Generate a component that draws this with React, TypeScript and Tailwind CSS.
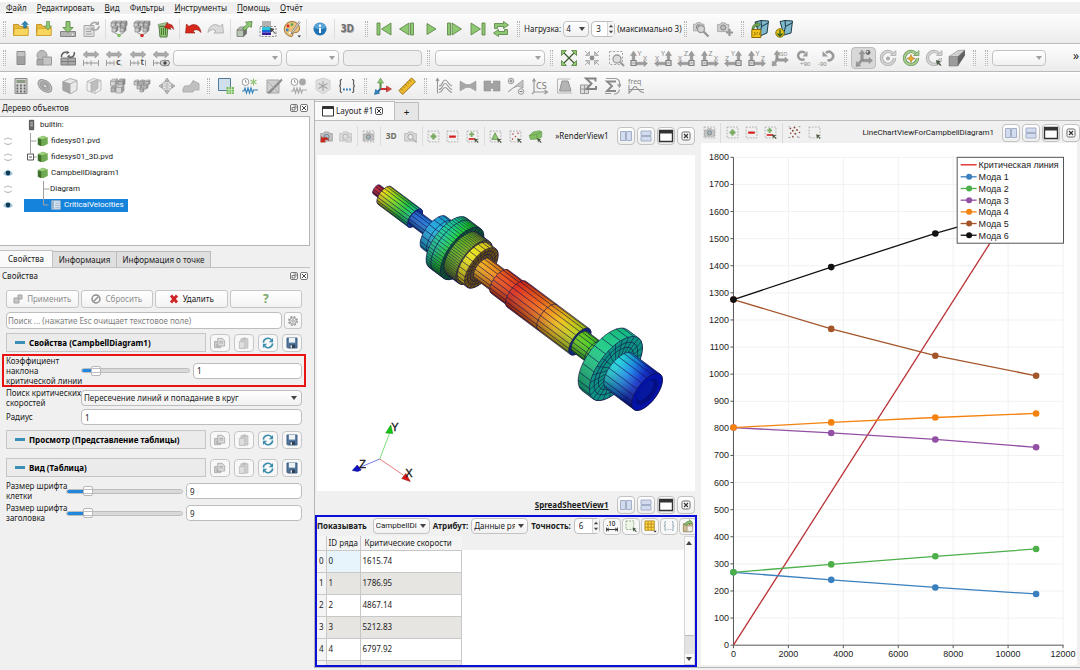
import { ReactNode } from "react";
import clsx from "clsx";

const GRAY = "#9b9b9b";
const GREEN = "#8fc873";
const DGREEN = "#55803f";

/* ---------- icons, all on an 18 x 18 grid ---------- */

function cube(x: number, y: number, s: number, fill: string, line: string) {
  const d = s * 0.3;
  return (
    <g fill={fill} stroke={line} strokeWidth=".7" strokeLinejoin="round">
      <path d={`M${x} ${y + d}h${s - d}v${s - d}h${d - s}z`} />
      <path d={`M${x} ${y + d}l${d} ${-d}h${s - d}l${-d} ${d}z`} />
      <path d={`M${x + s - d} ${y + d}l${d} ${-d}v${s - d}l${-d} ${d}z`} fill={line} />
    </g>
  );
}

const dashedBox = (
  <rect x="2.500" y="2.500" width="13" height="13" fill="none" stroke="#9a9a9a" strokeWidth=".9" strokeDasharray="2 1.600" />
);
const cursor = <path d="M11 11l5 1.600-2 .9 2.400 2.400-1 1-2.300-2.400-1 1.900z" fill="#4a5a42" />;
const folder = (
  <>
    <path d="M1.500 15.500v-11h5l1.500 2h8v9z" fill="#e9b93a" stroke="#b8871c" strokeWidth=".8" />
    <path d="M1.500 15.500l1-7h14l-.5 7z" fill="#f8d55c" stroke="#c59526" strokeWidth=".6" />
  </>
);
const camera = (c: string, lens: string) => (
  <>
    <path d="M2 5.500h3.500l1-2h5l1 2H16v9H2z" fill={c} stroke="#8f8f8f" strokeWidth=".8" />
    <circle cx="9" cy="9.500" r="3.200" fill={lens} stroke="#777" />
  </>
);
const servers = (c: string) => (
  <>
    {cube(1, 1, 6, "#cfcfcf", "#828282")}
    {cube(6, 1, 6, "#cfcfcf", "#828282")}
    {cube(11, 1, 6, "#c2c2c2", "#828282")}
    {cube(2, 6, 6, "#cfcfcf", "#828282")}
    {cube(10, 6, 6, "#c2c2c2", "#828282")}
    <path d="M4 12.500l5 2.500 5-2.500" fill="none" stroke="#9a9a9a" />
    <circle cx="9" cy="15.500" r="1.800" fill={c} />
  </>
);
const lr = (
  <>
    <path d="M1 5.500L5 2v2h8V2l4 3.500L13 9V7H5v2z" fill="#ababab" stroke="#8c8c8c" strokeWidth=".5" />
    <path d="M1.500 11v6M9 11.500v5M16.500 11v6M1 14h16M5 12.500v3" stroke="#9a9a9a" fill="none" />
  </>
);

function axes(v: string, h: string, left = false) {
  const flip = left ? "matrix(-1 0 0 1 18 0)" : undefined;
  return (
    <>
      <g transform={flip} fill={GRAY} stroke="#858585" strokeWidth=".4">
        <path d="M3.500 2L6.500 6.500H4.800V12h-2.600V6.500H.5z" />
        <path d="M17.500 14.500L14 17.500v-1.700H6v-2.600h8v-1.700z" />
        <path d="M1 11.500h5v5H1z" fill="#ddd" stroke="#808080" strokeWidth="1.200" />
        <path d="M2.500 13l2 2m0-2l-2 2" stroke="#707070" />
      </g>
      <g fontFamily="Noto Sans, sans-serif" fontSize="7" fill="#8d8d8d" textAnchor="middle">
        <text x={left ? 9 : 9.5} y="6.500">{v}</text>
        <text x={left ? 3 : 15} y="11.500">{h}</text>
      </g>
    </>
  );
}

const ring = (c: string, line: string) => (
  <>
    <path d="M14.800 6A6.500 6.500 0 1 0 15.500 9" fill="none" stroke={line} strokeWidth="3.200" />
    <path d="M14.800 6A6.500 6.500 0 1 0 15.500 9" fill="none" stroke={c} strokeWidth="2" />
    <path d="M11.500 6.500h5.500V1.500z" fill={c} stroke={line} strokeWidth=".6" />
  </>
);
const note = (t: string, x: number, y: number, size: number, fill = "#858585", weight = 400) => (
  <text x={x} y={y} fontSize={size} fill={fill} fontWeight={weight} fontFamily="Noto Sans, sans-serif">
    {t}
  </text>
);
const playFill = { fill: GREEN, stroke: DGREEN, strokeWidth: 0.8 };
const wave = (c: string) => (
  <path d="M1 14h2l1-3 1.500 5L7 11l1.500 5L10 11l1.500 5 1-3H17" fill="none" stroke={c} strokeWidth="1.100" />
);
const clock = (
  <>
    <circle cx="4.500" cy="5" r="3.400" fill="#fff" stroke="#9a9a9a" />
    <path d="M4.500 3v2.200h1.600" stroke="#777" fill="none" strokeWidth=".7" />
  </>
);

const ICONS: Record<string, ReactNode> = {
  open: <>{folder}<path d="M13 1l3.500 3.500h-2V8h-3V4.500h-2z" fill="#2f86b5" stroke="#1f5f86" strokeWidth=".4" /></>,
  recent: <>{folder}<path d="M13 10L9.500 6h2V1.500h3V6h2z" fill={GREEN} stroke={DGREEN} strokeWidth=".6" /></>,
  save: (
    <>
      <path d="M1.500 11.500h15v5h-15z" fill="#b4b4b4" stroke="#858585" />
      <path d="M9 12.500L3.800 7.500H7V1.500h4v6h3.200z" {...playFill} />
      <circle cx="13.500" cy="14.500" r=".8" fill="#fff" />
    </>
  ),
  reload: (
    <>
      <path d="M2 5.500h10v11H2z" fill="#dedede" stroke="#aaa" />
      <path d="M4 9h4M4 11.500h5M4 14h6" stroke="#a5a5a5" />
      <path d="M8.500 6.500a4.200 4.200 0 0 1 7-3M17 6a4.200 4.200 0 0 1-7 3" fill="none" stroke="#a8a8a8" strokeWidth="1.700" />
      <path d="M17 1v4h-4zM8.500 11.500v-4h4z" fill="#a8a8a8" />
    </>
  ),
  connect: servers("#7cc25e"),
  disconnect: servers("#c92b2b"),
  trash: (
    <>
      <path d="M3 6.500h9l-1 10.500H4z" fill="#8cc66f" stroke="#5b7a4b" />
      <path d="M5.500 8v7M7.500 8v7M9.500 8v7" stroke="#4d7a38" />
      <path d="M2 4.500l9-2 .5 2-9 2z" fill="#a9cf95" stroke="#5b7a4b" strokeWidth=".6" />
      <path d="M8.500 7.500l3-5 1.500 2c2.500-1 4.500 1.500 4.500 5-1.500-2-2.500-2.500-3.500-2l1 2z" fill="#d42a1e" stroke="#7d1a14" strokeWidth=".5" />
    </>
  ),
  undo: <path d="M1.500 13l1-9 2.500 2.500C10 2.500 16 5 17 12.500c-2.500-3-5-3.700-8-1.500l2 2z" fill="#d8281c" stroke="#8f170f" strokeWidth=".6" />,
  redo: <path d="M16.500 13l-1-9L13 6.500C8 2.500 2 5 1 12.500c2.500-3 5-3.700 8-1.500l-2 2z" fill="#dadada" stroke="#a8a8a8" strokeWidth=".8" />,
  cubeArrow: (
    <>
      {cube(2, 7, 9.5, "#b9c4b2", "#6f6f6f")}
      <path d="M7.500 8.500l5-4.500-2-1.800 6.500-.7-.7 6-1.800-1.500-4.500 4.500z" {...playFill} />
    </>
  ),
  scaleBar: (
    <>
      <path d="M3 1h9v6H3z" fill="#b2b2b2" />
      <path d="M3 7h9v3H3z" fill="#2ec4e0" />
      <path d="M3 10h9v2.500H3z" fill="#1d63d8" />
      <path d="M3 12.500h9V15H3z" fill="#3b1a9c" />
      <path d="M1 6.500h16v10H1z" fill="none" stroke="#888" strokeDasharray="2 1.500" />
      <path d="M12 9l4.500 5M11.500 8.500l3.500.8-2.700 2.400z" stroke="#444" fill="#444" />
    </>
  ),
  palette: (
    <>
      <path d="M9 1.500a7.500 7.500 0 1 0-.5 15c2 0 .5-2.500 2-3.500s5.500.5 6-4S13 1.500 9 1.500z" fill="#e8c07a" stroke="#8a5f1f" strokeWidth=".8" />
      <circle cx="5" cy="6" r="1.400" fill="#d22" />
      <circle cx="4.300" cy="10" r="1.400" fill="#3a7fd0" />
      <circle cx="9" cy="4.500" r="1.300" fill="#4ca64c" />
      <circle cx="7" cy="13" r="1.300" fill="#f2f2f2" />
      <path d="M16 1.500l-7 10-1 2.500 2-1.500 7-10z" fill="#f6f6f6" stroke="#555" strokeWidth=".6" />
      <path d="M14.500 15.500h3.500L16.200 17.500z" fill="#333" />
    </>
  ),
  info: (
    <>
      <circle cx="9" cy="9" r="6.500" fill="#2173b4" />
      <path d="M3 7.500a6.300 6.300 0 0 1 12 0c-3 2-9 2-12 0z" fill="#58a5da" />
      <path d="M8 8h2v5H8z" fill="#fff" />
      <circle cx="9" cy="5.700" r="1.200" fill="#fff" />
    </>
  ),
  threeD: <>{note("3D", 2.5, 12.5, 10, "#aaa", 700)}{note("3D", 1.7, 12, 10, "#6d6d6d", 700)}</>,
  first: <path d="M2 3h3v12H2zM16 3v12L6.500 9z" {...playFill} />,
  prev: <path d="M12.500 3h3v12h-3zM11 3v12L1.500 9z" {...playFill} />,
  play: <path d="M5 3.500l9 5.500-9 5.500z" {...playFill} />,
  next: <path d="M2.500 3h3v12h-3zM7 3v12l9.500-6z" {...playFill} />,
  last: <path d="M13 3h3v12h-3zM2 3v12l9.500-6z" {...playFill} />,
  loop: <path d="M2.500 8.500v-5h9V1.500l5 3.500-5 3.500V6.500h-6v2zM15.500 9.500v5h-9v2l-5-3.500 5-3.500v2h6v-2z" {...playFill} />,
  camSearch: (
    <>
      <g transform="scale(.75)">{camera("#cfcfcf", "#bbb")}</g>
      <circle cx="9" cy="9" r="3.500" fill="#d5d5d5" stroke="#989898" strokeWidth="1.300" />
      <path d="M11.500 11.500l5 5" stroke="#989898" strokeWidth="2.400" />
    </>
  ),
  camAdd: <><g transform="scale(.8)">{camera("#cfcfcf", "#bbb")}</g><path d="M10 12.500h7M13.500 9v7" stroke="#969696" strokeWidth="2.200" /></>,
  cubeJpg: (
    <>
      <path d="M4 2l6-1.500L17.500 1 16 13l-7 3z" fill="#7fb9cc" stroke="#1f3c48" />
      <path d="M10 .5l.5 6-2 9M10.500 6.500L17 3" fill="none" stroke="#173543" />
      <path d="M.8 9.500h9v8h-9z" fill="#f2c21b" stroke="#8c6a00" />
      <path d="M1 9C1.500 5 3.500 3.500 6 3.500V2l3.500 2.500L6.500 7.500V6C4.500 6 3.500 7 3 9z" fill="#6da550" stroke="#31531f" strokeWidth=".5" />
      <path d="M3 12.500h1v2.500H2.500M6 15v-2.500h1M8.500 12.500v2.500" stroke="#8c6a00" strokeWidth=".7" fill="none" />
    </>
  ),
  cubeLoad: (
    <>
      <path d="M5 1.500l5-1 7.500.5L16 13l-7 2z" fill="#7fb9cc" stroke="#1f3c48" />
      <path d="M10 .5l.5 6-2 8M10.500 6.500L17 3" fill="none" stroke="#173543" />
      <circle cx="5" cy="13" r="4.200" fill="#e8c21d" stroke="#7f7000" />
      <path d="M5 10v6M2.500 13.500L5 16l2.500-2.500" stroke="#2e5e1d" strokeWidth="1.300" fill="none" />
    </>
  ),
  block: <><path d="M5 2.500h8v13H5z" fill="#a0a0a0" stroke="#8b8b8b" /><path d="M5.500 3h7v4h-7z" fill="#c4c4c4" /></>,
  globeCube: <><circle cx="7" cy="6.500" r="5" fill="#bbb" stroke="#9a9a9a" /><path d="M7.500 8h9v8h-9z" fill="#c4c4c4" stroke="#9a9a9a" /><path d="M2 10.500h6V16H2z" fill="#a9a9a9" stroke="#959595" /></>,
  refreshCube: (
    <>
      <path d="M2 9h14.500v7H2z" fill="#a9a9a9" stroke="#7c7c7c" />
      <path d="M9 9v7M2 12.500h14.500" stroke="#7c7c7c" />
      <path d="M2.500 8a4 4 0 0 1 5-4.500M15 3a3.500 3.500 0 0 1-4 5" fill="none" stroke="#5b5b5b" strokeWidth="1.500" />
      <path d="M7.500 1.500v4l3-2zM10.500 5.500l.5 4-3-2z" fill="#5b5b5b" />
    </>
  ),
  rangeA: lr,
  rangeC: <>{lr}<circle cx="13.500" cy="13.500" r="3.800" fill="#f2f2f2" />{note("c", 11, 16, 9, "#555", 700)}</>,
  rangeT: <>{lr}<path d="M11 10h5v7h-5z" fill="#f2f2f2" />{note("t", 11.5, 16, 8, "#555", 700)}</>,
  rangeEye: <>{lr}<ellipse cx="13" cy="14" rx="4.500" ry="2.800" fill="#d8d8d8" stroke="#666" strokeWidth=".8" /><circle cx="13" cy="14" r="1.700" fill="#444" /></>,
  fitAll: (
    <g>
      <path d="M3 3l12 12M15 3L3 15" stroke="#3f5d31" strokeWidth="1.300" />
      <path d="M1.500 1.500h5l-5 5zM16.500 1.500v5l-5-5zM1.500 16.500v-5l5 5zM16.500 16.500h-5l5-5z" {...playFill} />
    </g>
  ),
  fitData: (
    <>
      <path d="M2 2l4 4M16 2l-4 4M2 16l4-4M16 16l-4-4" stroke="#b0b0b0" />
      <path d="M6.500 6.500h-4l4-4zM11.500 6.500v-4l4 4zM6.500 11.500v4l-4-4zM11.500 11.500h4l-4 4z" fill="#c6c6c6" stroke="#9c9c9c" strokeWidth=".7" />
      <circle cx="9" cy="9" r="2.400" fill="#8d8d8d" />
    </>
  ),
  zoomBox: <>{dashedBox}<circle cx="10" cy="10" r="4" fill="#ddd" stroke={GRAY} strokeWidth="1.300" /><path d="M13 13l4 4" stroke={GRAY} strokeWidth="2.200" /></>,
  xp: axes("Y", "X"),
  xm: axes("Y", "X", true),
  yp: axes("Z", "X", true),
  ym: axes("Z", "X"),
  zp: axes("Y", "Z", true),
  zm: axes("Y", "Z"),
  iso: (
    <>
      <path d="M6 1.500l3 4H7.200V11H4.800V5.500H3zM17.500 11L14 14v-1.800H7V9.800h7V8zM1 17l.5-5 1.500 1.200L5 10l1.500 1.700L4.500 15 6 16.300z" fill={GRAY} stroke="#858585" strokeWidth=".4" />
      {note("ISO", 8, 6.5, 5)}
    </>
  ),
  rotP: <><path d="M9.500 10A4 4 0 1 1 10 4" fill="none" stroke={GRAY} strokeWidth="2.600" /><path d="M12.500 2v5.500H7.500z" fill={GRAY} />{note("+90", 5, 16.5, 6)}</>,
  rotM: <><path d="M9.500 11A4.200 4.200 0 1 0 8 4" fill="none" stroke={GRAY} strokeWidth="2.600" /><path d="M4.500 2v5.500h5.500z" fill={GRAY} />{note("-90", 0, 16.5, 6)}</>,
  triad: (
    <>
      <path d="M7 1l3 4H8.200v6.500H5.800V5H4zM17.500 11.500L14 14.500v-1.800H8v-2.400h6V8.500zM1 17.500l.5-5L3 13.700l3-3.200 1.500 1.700L4.500 15.500 6 16.800z" fill="#979797" stroke="#7d7d7d" strokeWidth=".4" />
      <circle cx="13" cy="3.500" r="2.400" fill="#6c6c6c" />
      <circle cx="12.300" cy="2.800" r=".9" fill="#eee" />
    </>
  ),
  rotCenter: <>{ring("#d3d3d3", "#a3a3a3")}<circle cx="9" cy="9.500" r="2" fill="#aaa" /></>,
  rotGreen: <>{ring("#a3cf8c", "#62834f")}<path d="M9 5.500l1.200 2.800 2.800 1.200-2.800 1.200L9 13.500l-1.200-2.800L5 9.500l2.800-1.200z" fill="#e8a92e" stroke="#9c6a10" strokeWidth=".5" /></>,
  rotPick: <>{ring("#d3d3d3", "#a3a3a3")}{cursor}</>,
  prism: <><path d="M1 7.500h9V17H1z" fill="#9c9c9c" stroke="#666" strokeWidth=".5" /><path d="M1 7.500L10 1.500l7-.5-7 6.500z" fill="#d0d0d0" stroke="#777" strokeWidth=".5" /><path d="M10 7.500L17 1v5.500L10 17z" fill="#636363" /></>,
  calc: (
    <>
      <path d="M3 1.500h12v15H3z" fill="#d4d4d4" stroke="#8a8a8a" />
      <path d="M4.500 3h9v3h-9z" fill="#8d9a85" />
      <path d="M4.500 8.500h9M4.500 11.500h9M4.500 14.500h9" stroke="#666" strokeWidth="1.800" strokeDasharray="1.800 1.800" />
    </>
  ),
  contour: <g transform="rotate(40 9 9)" fill="none" stroke="#969696"><ellipse cx="9" cy="9" rx="8" ry="5" fill="#c2c2c2" /><ellipse cx="9" cy="9" rx="5.500" ry="3.200" fill="#b0b0b0" /><ellipse cx="9" cy="9" rx="2.500" ry="1.400" fill="#ddd" /></g>,
  clip: (
    <g stroke="#a0a0a0" strokeWidth=".8" strokeLinejoin="round">
      <path d="M2 4.500l7-3 7 2v9.500l-6 3.500-8-3z" fill="#e9e9e9" />
      <path d="M2 4.500l7 2.500v9.500l-7-3.500z" fill="#a6a6a6" />
      <path d="M9 7l7-3.500" fill="none" />
    </g>
  ),
  slice: (
    <g stroke="#b0b0b0" strokeWidth=".8" strokeLinejoin="round">
      <path d="M2 4.500l7-3 7 2v9.500l-6 3.500-8-3z" fill="#f1f1f1" />
      <path d="M2 4.500l8 2.500v9.500M10 7l6-3.500" fill="none" />
      <path d="M6 5l7-2.500v9L6 15z" fill="#bebebe" />
    </g>
  ),
  threshold: <>{cube(1.5, 2, 7, "#d5d5d5", "#999")}{cube(9, 2, 7, "#b5b5b5", "#8a8a8a")}{cube(2, 9, 6, "#b5b5b5", "#8a8a8a")}{cube(7, 8, 8, "#d5d5d5", "#999")}</>,
  subset: <>{cube(1, 3, 5, "#c8c8c8", "#959595")}{cube(6.5, 3, 5, "#b5b5b5", "#959595")}{cube(12, 3, 5, "#c8c8c8", "#959595")}{cube(4, 7, 5, "#c0c0c0", "#959595")}{cube(10, 7, 5, "#b5b5b5", "#959595")}{cube(7, 11, 4, "#c0c0c0", "#959595")}</>,
  glyph: (
    <>
      <circle cx="9" cy="9" r="5" fill="#e8e8e8" stroke="#a6a6a6" />
      <path d="M4 9h10M9 4v10M5.500 6c2 1.500 5 1.500 7 0M5.500 12c2-1.500 5-1.500 7 0" fill="none" stroke="#bbb" />
      <path d="M9 1l2 3H7zM9 17l2-3H7zM1 9l3-2v4zM17 9l-3-2v4z" fill="#c4c4c4" stroke="#909090" strokeWidth=".7" />
    </>
  ),
  warp: <path d="M1 12l1.500-3c6 0 6-1 8.500-5.500l6 3v6.500h-5l-1 2H1z" fill="#c0c0c0" stroke="#a3a3a3" strokeWidth=".8" />,
  group: <><path d="M1.500 1.500h12v12h-12z" fill="#cfe0ec" stroke="#50799a" /><path d="M9.500 10h7.500v7H9.500z" fill="#77bb58" /><path d="M12 10v7M14.500 10v7M9.500 12.500H17M9.500 15H17" stroke="#d6ecca" strokeWidth=".7" /></>,
  clockWave: <>{clock}<path d="M12.500 1.500v7M9.500 3l6 4M15.500 3l-6 4" stroke="#8fc073" strokeWidth="1.100" />{wave("#2e7eb8")}</>,
  pencilChart: <><path d="M2 3h12v13H2z" fill="#cfcfcf" stroke="#a5a5a5" /><path d="M2 16L16.500 1.500l1 2L5 16.500z" fill="#8c8c8c" /><path d="M3 5l10 10" stroke="#aaa" /></>,
  clockBall: <>{clock}<circle cx="12.500" cy="5" r="3.400" fill="#a8a8a8" />{wave("#a8a8a8")}</>,
  star: <><path d="M9 1l7 2.500v9L9 17l-7-4.500v-9z" fill="#dfdfdf" stroke="#cfcfcf" /><path d="M9 4v10M4.500 6.500l9 5M13.500 6.500l-9 5" stroke="#a3a3a3" strokeWidth="1.100" /></>,
  braces: (
    <>
      <path d="M4 2.500c-2.500 0-1.500 2-1.500 4S2 9 1 9c1 0 1.500.5 1.500 2.500s-1 4 1.500 4M14 2.500c2.500 0 1.500 2 1.500 4S16 9 17 9c-1 0-1.500.5-1.500 2.500s1 4-1.500 4" fill="none" stroke="#5e5e5e" strokeWidth="1.200" />
      <path d="M5 12.500h8" stroke="#2e7eb8" strokeWidth="1.800" strokeDasharray="1.800 1.200" />
    </>
  ),
  triadColor: (
    <>
      <path d="M6.500 12V5" stroke="#5d8c45" strokeWidth="2" /><path d="M6.500 1l3 5h-6z" fill={GREEN} stroke={DGREEN} strokeWidth=".5" />
      <path d="M6.500 12H13" stroke="#c33" strokeWidth="2" /><path d="M17.500 12l-5-3v6z" fill="#e0433a" stroke="#8b1a15" strokeWidth=".5" />
      <path d="M6.500 12L3.500 15" stroke="#2a6ea3" strokeWidth="2" /><path d="M.5 17.500l1.200-5.200 4 4z" fill="#2f86c5" stroke="#1c5680" strokeWidth=".5" />
    </>
  ),
  ruler: <g transform="rotate(-45 9 9)"><path d="M0 6.500h18v5.500H0z" fill="#edb92c" stroke="#8b6711" strokeWidth=".8" /><path d="M3 6.500v2.500M6 6.500v2M9 6.500v2.500M12 6.500v2M15 6.500v2.500" stroke="#8b6711" strokeWidth=".8" /></g>,
  layers: <path d="M2.500 16.500V2M1 4l1.500-2.500L4 4M4 9c4 0 3-6 6-6s3 5 7 6M4 12.500c4 0 3-6 6-6s3 5 7 6M4 15.500c4 0 3-5 6-5s3 4 7 5" fill="none" stroke="#979797" strokeWidth="1.100" />,
  bowtie: <path d="M1 4l6 3.500h4L17 4v10l-6-3.500H7L1 14z" fill="#a6a6a6" stroke="#979797" strokeWidth=".5" />,
  neck: <path d="M1 4h7l-1 2.500h4L10 4h7v10h-7l1-2.500H7L8 14H1z" fill="#a2a2a2" stroke="#929292" strokeWidth=".6" />,
  plusMinus: (
    <>
      <path d="M1 15L16 3v8l-5-2-5 2z" fill="#c4c4c4" stroke="#9a9a9a" strokeWidth=".8" />
      <circle cx="4" cy="4" r="2.800" fill="#ececec" stroke="#9a9a9a" /><path d="M2.500 4h3M4 2.500v3" stroke="#808080" />
      <circle cx="14" cy="14.500" r="2.800" fill="#ececec" stroke="#9a9a9a" /><path d="M12.500 14.500h3" stroke="#808080" />
    </>
  ),
  cs: <><path d="M3 15V3M1.500 4.500L3 2l1.500 2.500M3 15h13M13.500 13l3 2-3 2M3 15l-2 2" fill="none" stroke="#9a9a9a" strokeWidth="1.200" />{note("CS", 5, 11.5, 9, "#777")}</>,
  spectrum: <><path d="M4.500 14L7 4h6l3 10z" fill="#b4b4b4" stroke="#929292" /><path d="M2.500 16V2h13M2.500 16H17" fill="none" stroke="#aeaeae" strokeWidth=".9" /></>,
  sumGrid: <><path d="M1.500 8h8v8.500h-8zM5.500 8v8.500M1.500 12h8" fill="#ddd" stroke="#999" /><path d="M16.500 4.500v-3H7l5.500 5L7.500 12h9.500V9" fill="none" stroke="#828282" strokeWidth="1.900" /></>,
  sumLoop: <><path d="M13 4.500H4l5 4.500-5 5h9" fill="none" stroke="#8a8a8a" strokeWidth="1.900" /><path d="M3 1.500h9c4 0 5 3 4.500 7M11 17c4 0 5-2 5.500-4.500M2 16.500h6M14.500 7l2 3 1.500-3" fill="none" stroke="#9b9b9b" strokeWidth="1.200" /></>,
  freq: <>{note("freq", 1, 6.5, 7)}<path d="M2 17V8M2 15.500c3 0 3.500-6 6-6s3 6 9 6M2 12.500h15" fill="none" stroke="#929292" strokeWidth="1.100" /></>,
  camUndo: <>{camera("#c3c3c3", "#9fc0cf")}<path d="M2 16l1-7 2 1.800c3-2 6-.5 7 3-2-1.500-4-1.500-5.500 0l1.500 2z" fill="#d3261b" stroke="#7d1a14" strokeWidth=".4" /></>,
  camRedo: <g opacity=".6">{camera("#cfcfcf", "#ddd")}<path d="M16 16l-1-7-2 1.800c-3-2-6-.5-7 3 2-1.500 4-1.500 5.500 0L10 15.800z" fill="#ccc" stroke="#888" strokeWidth=".5" /></g>,
  shot: <>{dashedBox}<g transform="translate(1.500 1.500) scale(.83)">{camera("#c9c9c9", "#9fb4bd")}</g></>,
  text3d: note("3D", 2, 12.5, 10, "#6f6f62", 700),
  lens: <g opacity=".75">{camera("#d5d5d5", "#e8e8e8")}<path d="M12 12l4.500 4.500" stroke="#a5a5a5" strokeWidth="2" /></g>,
  selAdd: <>{dashedBox}<path d="M9 5.500v7M5.500 9h7" stroke="#7aab60" strokeWidth="3" /></>,
  selSub: <>{dashedBox}<path d="M5 7.800h8v2.700H5z" fill="#d42222" /></>,
  selToggle: <>{dashedBox}<path d="M8 3.500v6M5 6.500h6" stroke="#7aab60" strokeWidth="2.200" /><path d="M4.500 11h7.500v2H4.500z" fill="#d42222" />{cursor}</>,
  selPoly: <>{dashedBox}<path d="M8.500 4.500l4 8H4.500z" {...playFill} />{cursor}</>,
  selPoints: (
    <>
      {dashedBox}
      <g fill="#a33"><circle cx="6" cy="6" r=".9" /><circle cx="12" cy="5" r=".9" /><circle cx="9" cy="9" r=".9" /><circle cx="5.500" cy="12" r=".9" /></g>
      {cursor}
    </>
  ),
  selBlock: <><path d="M1.500 8L6 3.500l8-1.500 2.500 1.500v6L12 12l-9 .5z" fill="#82bf64" stroke="#5c9142" strokeWidth=".7" /><path d="M1.500 8l9-1.500 6-3M10.500 6.500V12" fill="none" stroke="#5c9142" strokeWidth=".7" />{cursor}</>,
  selScatter: (
    <g>
      <g fill="#8c4a3f"><circle cx="4" cy="4" r="1.100" /><circle cx="9" cy="3" r="1.100" /><circle cx="7" cy="7" r="1.200" /><circle cx="12" cy="6" r="1.100" /><circle cx="4.500" cy="10" r="1" /><circle cx="10" cy="10.500" r="1.200" /><circle cx="15" cy="9" r="1" /><circle cx="7" cy="14" r="1" /></g>
      <path d="M2 2h1M14 2h2M2 15h2M12 14l3 1" stroke="#777" />
    </g>
  ),
  selCursor: <>{dashedBox}{cursor}</>,
  dotTen: <>{note(".10", 2, 9.5, 8, "#222", 500)}<path d="M2 11v5M16 11v5M2.500 13.500h13M5 11.500l-2.500 2L5 15.500M13 11.500l2.500 2-2.500 2" fill="none" stroke="#222" strokeWidth="1.100" /></>,
  selGreen: <><rect x="2.500" y="2.500" width="10" height="11" fill="#eef6e8" stroke="#7e9c6f" strokeDasharray="2.500 1.500" />{cursor}</>,
  gridYellow: <><path d="M2.500 2.500h12v12h-12z" fill="#ffd84d" stroke="#a87d0a" /><path d="M6.500 2.500v12M10.500 2.500v12M2.500 6.500h12M2.500 10.500h12" stroke="#a87d0a" strokeWidth=".9" /><path d="M13.500 15h4l-2 2.500z" fill="#222" /></>,
  bracesSmall: <path d="M5 3c-2 0-1 2-1 4s-.5 2-1.500 2c1 0 1.500.5 1.500 2s-1 4 1 4M13 3c2 0 1 2 1 4s.5 2 1.500 2c-1 0-1.500.5-1.500 2s1 4-1 4M6 13.500h1m1.500 0h1m1.500 0h1" fill="none" stroke="#7393a5" strokeWidth="1.100" />,
  pasteGreen: <><path d="M3 6h12l-1 10.500H3z" fill="#cdbb94" stroke="#8a7a55" /><path d="M8 9h7v7H8z" fill="#f3efe4" stroke="#998f78" strokeWidth=".7" /><path d="M5 8c0-4 3-5 6-5V1l4 3.500L11 7V5.500c-2 0-3 .5-3 2.500z" {...playFill} /></>,
  copy: <><path d="M2 7h8v8H2z" fill="#ccc" stroke="#a5a5a5" /><path d="M6 3h6l3 3v7H6z" fill="#dcdcdc" stroke="#a5a5a5" /><path d="M8 7h5M8 9h5M4 11h1M4 13h4" stroke="#a5a5a5" /></>,
  paste: <><path d="M5 3.500h9v12H5z" fill="#cfcfcf" stroke="#b8b8b8" /><path d="M7.500 2h4v3h-4z" fill="#bbb" /><path d="M3 7h7v9H3z" fill="#dedede" stroke="#b8b8b8" /></>,
  sync: <><path d="M3 8.500a6 6 0 0 1 10.500-3.500M15 9.500a6 6 0 0 1-10.500 3.500" fill="none" stroke="#3b8dab" strokeWidth="2" /><path d="M15.500 2.500V8H10zM2.500 15.500V10H8z" fill="#3b8dab" /></>,
  disk: <><path d="M2.500 2.500h13v13h-12l-1-1z" fill="#51779f" stroke="#365577" /><path d="M5 2.500h8v6H5z" fill="#eef2f6" /><path d="M6 11h7v4.500H6z" fill="#2d3f55" /><path d="M7 12h2v3H7z" fill="#dfe6ee" /></>,
};

function Icon({ name, className = "size-[18px]" }: { name: string; className?: string }) {
  return (
    <svg viewBox="0 0 18 18" className={clsx("shrink-0", className)} aria-hidden="true">
      {ICONS[name]}
    </svg>
  );
}

/* ---------- small shared pieces ---------- */

function Grip({ className = "w-[9px]" }: { className?: string }) {
  return (
    <span className={clsx("flex h-4 shrink-0 justify-center gap-px", className)}>
      <span className="w-px border-l border-dotted border-[#b5b5b5]" />
      <span className="w-px border-l border-dotted border-[#b5b5b5]" />
    </span>
  );
}

function Sep() {
  return (
    <span className="flex w-1 shrink-0 justify-center">
      <span className="h-5 w-px bg-[#dcdcdc]" />
    </span>
  );
}

interface GroupProps {
  icons: string[];
  className: string;
  active?: string;
  iconClass?: string;
}

function Group({ icons, className, active, iconClass }: GroupProps) {
  return (
    <div className={clsx("flex shrink-0 items-center", className)}>
      {icons.map((name) => (
        <button
          key={name}
          type="button"
          aria-label={name}
          className={clsx(
            "flex h-[22px] flex-1 items-center justify-center rounded-sm",
            name === active && "border border-[#bdbdbd] bg-[#d8d8d8]",
          )}
        >
          <Icon name={name} className={iconClass} />
        </button>
      ))}
    </div>
  );
}

interface DropDownProps {
  label: string;
  value?: string;
  className: string;
  disabled?: boolean;
}

function DropDown({ label, value = "", className, disabled }: DropDownProps) {
  return (
    <div className={clsx("relative shrink-0", className)}>
      <select
        aria-label={label}
        disabled={disabled}
        className="block h-full w-full appearance-none overflow-hidden rounded-sm border border-[#c3c3c3] bg-linear-to-b from-white to-[#f1f1f1] pr-3 pl-[2px] text-[#1c1c1c]"
      >
        <option>{value}</option>
      </select>
      <svg
        viewBox="0 0 6 4"
        className={clsx("pointer-events-none absolute top-1/2 right-1 h-1 w-1.5 -translate-y-1/2", disabled ? "fill-[#a0a0a0]" : "fill-[#444]")}
      >
        <path d="M0 0h6L3 4z" />
      </svg>
    </div>
  );
}

function Spin({ label, value, className }: { label: string; value: string; className: string }) {
  return (
    <span className={clsx("flex h-4 shrink-0 items-stretch rounded-sm border border-[#bdbdbd] bg-white", className)}>
      <input aria-label={label} defaultValue={value} className="w-0 flex-1 pl-1" />
      <svg viewBox="0 0 7 14" className="w-[7px] border-l border-[#d5d5d5] bg-[#f4f4f4] fill-[#444]">
        <path d="M1 5h5L3.500 2zM1 9h5l-2.500 3z" />
      </svg>
    </span>
  );
}

function DockTitle({ children }: { children: ReactNode }) {
  return (
    <div className="flex h-4 items-center gap-0.5 px-0.5">
      <h2 className="flex-1">{children}</h2>
      {["Открепить", "Закрыть"].map((label, i) => (
        <button key={label} type="button" aria-label={label} className="size-2 rounded-[2px] border border-[#777] bg-white">
          <svg viewBox="0 0 6 6" className="size-full" fill="none" stroke="#444">
            {i === 0 ? <path d="M1 2.500h3v2.500H1zM2.500 1H5v2.500" strokeWidth=".7" /> : <path d="M1 1l4 4M5 1L1 5" />}
          </svg>
        </button>
      ))}
    </div>
  );
}

const VIEW_BUTTONS: { label: string; icon: ReactNode }[] = [
  { label: "Разделить по горизонтали", icon: <path d="M2.500 3.500h5v9h-5zM8.500 3.500h5v9h-5z" fill="#d3dbee" stroke="#a3aec8" /> },
  { label: "Разделить по вертикали", icon: <path d="M3 3h10v4.500H3zM3 8.500h10v4.500H3z" fill="#d3dbee" stroke="#a3aec8" /> },
  { label: "Развернуть", icon: <><path d="M1.500 2.500h13v11h-13z" fill="#fff" stroke="#333" strokeWidth="1.400" /><path d="M1 2h14v3.500H1z" fill="#333" /></> },
  { label: "Закрыть вид", icon: <><rect x="4" y="4" width="8" height="8" rx="1.500" fill="#fff" stroke="#666" /><path d="M6 6l4 4m0-4l-4 4" stroke="#333" strokeWidth="1.200" /></> },
];

function ViewButtons() {
  return (
    <div className="flex shrink-0 gap-0.5">
      {VIEW_BUTTONS.map((b) => (
        <button
          key={b.label}
          type="button"
          aria-label={b.label}
          className="flex size-[18px] items-center justify-center rounded-sm border border-[#c2c2c2] bg-linear-to-b from-white to-[#efefef]"
        >
          <svg viewBox="0 0 16 16" className="size-4 shrink-0">{b.icon}</svg>
        </button>
      ))}
    </div>
  );
}

/* ---------- menu and toolbars ---------- */

const MENU = [
  ["", "Ф", "айл"],
  ["", "Р", "едактировать"],
  ["", "В", "ид"],
  ["Фи", "л", "ьтры"],
  ["", "И", "нструменты"],
  ["", "П", "омощь"],
  ["", "О", "тчёт"],
];

function MenuBar() {
  return (
    <nav className="mt-0.5 flex h-3 items-center gap-2.5 bg-[#f0f0f0] pl-1.5">
      {MENU.map(([a, key, b]) => (
        <button key={key} type="button">
          {a}
          <span className="underline">{key}</span>
          {b}
        </button>
      ))}
    </nav>
  );
}

const BAR = "flex items-center border-t border-white border-b border-b-[#b9b9b9] bg-linear-to-b from-[#fcfcfc] to-[#ececec] overflow-hidden";

function Toolbars() {
  return (
    <header className="shrink-0">
      <div className={clsx(BAR, "h-[30px]")}>
        <Grip />
        <Group className="w-[94px]" icons={["open", "recent", "save", "reload"]} />
        <Sep />
        <Group className="w-[70px]" icons={["connect", "disconnect", "trash"]} />
        <Sep />
        <Group className="w-[47px]" icons={["undo", "redo"]} />
        <Sep />
        <Group className="w-[72px]" icons={["cubeArrow", "scaleBar", "palette"]} />
        <Sep />
        <Group className="w-6" icons={["info"]} />
        <Sep />
        <Group className="w-6" icons={["threeD"]} />
        <Grip className="w-3" />
        <Group className="w-[141px]" icons={["first", "prev", "play", "next", "last", "loop"]} />
        <Grip className="w-[11px]" />
        <span className="flex items-center gap-0.5">
          Нагрузка:
          <DropDown label="Нагрузка" value="4" className="h-4 w-[26px]" />
          <Spin label="Шаг" value="3" className="w-6" />
          <span>(максимально 3)</span>
        </span>
        <Grip className="w-2" />
        <Group className="w-[47px]" icons={["camSearch", "camAdd"]} />
        <Grip className="w-3" />
        <Group className="w-[47px]" icons={["cubeJpg", "cubeLoad"]} />
      </div>
      <div className={clsx(BAR, "h-7")}>
        <Grip />
        <Group className="w-[164px]" icons={["block", "globeCube", "refreshCube", "rangeA", "rangeC", "rangeT", "rangeEye"]} />
        <div className="flex shrink-0 gap-1">
          <DropDown label="Поле" className="h-4 w-[109px]" disabled />
          <DropDown label="Компонента" className="h-4 w-[53px]" disabled />
          <input aria-label="Значение" disabled className="h-4 w-[79px] rounded-sm border border-[#c3c3c3] bg-[#efefef]" />
        </div>
        <Grip className="w-[13px]" />
        <DropDown label="Представление" className="h-4 w-[110px]" disabled />
        <Grip className="w-3" />
        <Group className="w-[282px]" icons={["fitAll", "fitData", "zoomBox", "xp", "xm", "yp", "ym", "zp", "zm", "iso", "rotP", "rotM"]} />
        <Grip className="w-3" />
        <Group className="w-[117px]" icons={["triad", "rotCenter", "rotGreen", "rotPick", "prism"]} active="triad" />
        <Grip className="w-3" />
        <Grip className="w-3" />
        <DropDown label="Размер" className="h-4 w-[54px]" disabled />
        <button type="button" className="mr-px mb-1 ml-auto text-xs leading-3">
          »
        </button>
      </div>
      <div className={clsx(BAR, "h-7")}>
        <Grip />
        <Group className="w-[194px]" icons={["calc", "contour", "clip", "slice", "threshold", "subset", "glyph", "warp"]} />
        <Grip className="w-[11px]" />
        <Group className="w-[145px]" icons={["group", "clockWave", "pencilChart", "clockBall", "star", "braces"]} />
        <Grip className="w-3" />
        <Group className="w-[48px]" icons={["triadColor", "ruler"]} />
        <Grip className="w-[13px]" />
        <Group className="w-[216px]" icons={["layers", "bowtie", "neck", "plusMinus", "cs", "spectrum", "sumGrid", "sumLoop", "freq"]} />
      </div>
    </header>
  );
}

/* ---------- object tree ---------- */

interface TreeItem {
  name: string;
  visible?: boolean;
  guide: ReactNode;
  guideClass: string;
  icon?: "server" | "cube" | "sheet";
  selected?: boolean;
}

const TREE: TreeItem[] = [
  { name: "builtin:", guide: <path d="M6.500 0v4" />, guideClass: "w-0.5", icon: "server" },
  { name: "fidesys01.pvd", visible: false, guide: <path d="M6.500 0v16M6.500 8h6" />, guideClass: "w-[13px]", icon: "cube" },
  { name: "fidesys01_3D.pvd", visible: false, guide: <><path d="M6.500 0v4M10 8h3" /><path d="M3.500 5h6v6h-6zM5 8h3" stroke="#555" /></>, guideClass: "w-[13px]", icon: "cube" },
  { name: "CampbellDiagram1", visible: true, guide: null, guideClass: "w-[13px]", icon: "cube" },
  { name: "Diagram", visible: false, guide: <path d="M19.500 0v16M19.500 8h6" />, guideClass: "w-[26px]" },
  { name: "CriticalVelocities", visible: true, guide: <path d="M19.500 0v8h5" />, guideClass: "w-[26px]", icon: "sheet", selected: true },
];

const TREE_ICONS = {
  server: <><path d="M4 1.500h5v11H4z" fill="#666" stroke="#444" /><path d="M5 4h3M5 6h3M5 8h3" stroke="#ccc" /></>,
  cube: <><path d="M1 3.500L7 1l5.500 2v7.500L7 13l-6-1.500z" fill="#6faa52" /><path d="M1 3.500L5 5v8l-4-1.500z" fill="#3f6f2b" /><path d="M1 3.500L7 1l5.500 2L5 5z" fill="#9ad07c" /></>,
  sheet: <><path d="M2 2h10v10H2z" fill="#d7e5f3" stroke="#9db4c9" /><path d="M2.500 2.500h2v9h-2z" fill="#8fa9c2" /><path d="M6 5h5M6 7.500h5M6 10h5" stroke="#8fa9c2" strokeWidth=".8" /></>,
};

function Eye({ open }: { open: boolean }) {
  return (
    <svg viewBox="0 0 10 8" className="h-2 w-2.5">
      {open ? (
        <>
          <path d="M0 4.500C2.500 0 7.500 0 10 4.500 7.500 8 2.500 8 0 4.500z" fill="#a9cede" />
          <circle cx="5" cy="4" r="2.400" fill="#123c55" />
        </>
      ) : (
        <path d="M1 3C3 .5 7 .5 9 3M1 5.500C3 8 7 8 9 5.500" fill="none" stroke="#9c9c9c" strokeWidth=".8" />
      )}
    </svg>
  );
}

function ObjectTree() {
  return (
    <ul className="h-[130px] border border-l-0 border-[#b4b4b4] bg-white">
      {TREE.map((item) => (
        <li key={item.name} className="flex h-4 items-center">
          <button type="button" aria-label="Видимость" className="mr-[11px] ml-[3px] w-2.5">
            {item.visible !== undefined && <Eye open={item.visible} />}
          </button>
          <span
            className={clsx(
              "flex items-center",
              item.selected ? "h-[13px] bg-[#1583dc] pr-1 text-white" : "h-4",
            )}
          >
            <svg className={clsx("h-4 shrink-0", item.guideClass)} fill="none" stroke="#a0a0a0">
              {item.guide}
            </svg>
            {item.icon && (
              <svg viewBox="0 0 14 14" className="mr-0.5 size-3 shrink-0">
                {TREE_ICONS[item.icon]}
              </svg>
            )}
            <span className="font-[Roboto,sans-serif] whitespace-nowrap">{item.name}</span>
          </span>
        </li>
      ))}
    </ul>
  );
}

/* ---------- properties ---------- */

const FIELD = "h-4 min-w-0 rounded-sm border border-[#bdbdbd] bg-white px-[3px]";

function GroupHeader({ children }: { children: ReactNode }) {
  return (
    <div className="flex h-[19px] items-center gap-1">
      <h3 className="flex h-full flex-1 items-center border border-[#c6c6c6] bg-[#ebebeb] pl-2 font-bold text-black">
        <span className="mr-1 h-[3px] w-2.5 bg-[#3a8fb7]" />
        {children}
      </h3>
      {["copy", "paste", "sync", "disk"].map((name) => (
        <button
          key={name}
          type="button"
          aria-label={name}
          className="flex h-[18px] w-5 items-center justify-center rounded-sm border border-[#c6c6c6] bg-[#f8f8f8]"
        >
          <Icon name={name} className="size-[14px]" />
        </button>
      ))}
    </div>
  );
}

function Slider({ id, value, className }: { id: string; value: number; className: string }) {
  return (
    <input
      id={id}
      type="range"
      min={0}
      max={100}
      defaultValue={value}
      style={{ backgroundSize: `${value + 4}% 100%` }}
      className={clsx(
        "h-[3px] shrink-0 appearance-none rounded-full bg-[#d9d9d9] bg-linear-to-r from-[#1f87dc] to-[#1f87dc] bg-no-repeat outline outline-[#bdbdbd]",
        "[&::-webkit-slider-thumb]:size-[10px] [&::-webkit-slider-thumb]:appearance-none [&::-webkit-slider-thumb]:rounded-[2px] [&::-webkit-slider-thumb]:border [&::-webkit-slider-thumb]:border-[#b5b5b5] [&::-webkit-slider-thumb]:bg-white",
        className,
      )}
    />
  );
}

const ACTION = "flex items-center justify-center gap-1 rounded-[3px] border border-[#c6c6c6] bg-linear-to-b from-white to-[#f3f3f3]";

function Properties() {
  return (
    <div className="flex flex-col pr-2 pl-1.5">
      <div className="mt-1.5 grid h-[18px] grid-cols-4 gap-0.5">
        <button type="button" disabled className={clsx(ACTION, "text-[#8f8f8f]")}>
          <svg viewBox="0 0 10 10" className="size-2.5"><path d="M1 4h5v5H1zM5 1h4v4H5z" fill="#c4c4c4" stroke="#a5a5a5" /></svg>
          Применить
        </button>
        <button type="button" disabled className={clsx(ACTION, "text-[#8f8f8f]")}>
          <svg viewBox="0 0 10 10" className="size-2.5" fill="none" stroke="#8c8c8c" strokeWidth="1.500"><circle cx="5" cy="5" r="4" /><path d="M2.500 7.500l5-5" /></svg>
          Сбросить
        </button>
        <button type="button" className={ACTION}>
          <svg viewBox="0 0 10 10" className="size-2.5"><path d="M2 1.500l6 7M8 1.500l-6 7" stroke="#cf2424" strokeWidth="2.800" /></svg>
          Удалить
        </button>
        <button type="button" className={clsx(ACTION, "text-xs font-bold text-[#7aa566]")}>
          ?
        </button>
      </div>

      <div className="mt-1 flex h-[17px] gap-0.5">
        <input
          aria-label="Поиск"
          placeholder="Поиск ... (нажатие Esc очищает текстовое поле)"
          className={clsx(FIELD, "h-[17px] flex-1 px-px placeholder:text-[#808080]")}
        />
        <button type="button" aria-label="Дополнительно" className={clsx(ACTION, "w-[18px]")}>
          <svg viewBox="0 0 12 12" className="size-3" fill="none" stroke="#9d9d9d">
            <circle cx="6" cy="6" r="4.200" strokeWidth="1.600" strokeDasharray="2 1.300" />
            <circle cx="6" cy="6" r="3.200" />
            <circle cx="6" cy="6" r="1.300" />
          </svg>
        </button>
      </div>

      <div className="mt-1">
        <GroupHeader>Свойства (CampbellDiagram1)</GroupHeader>
      </div>

      <div className="mt-0.5 -mr-1 -ml-1 flex h-[33px] items-center border-2 border-[#e81414] px-0.5">
        <label htmlFor="slope" className="w-[76px] shrink-0 leading-[10px] whitespace-nowrap">
          Коэффициент
          <br />
          наклона
          <br />
          критической линии
        </label>
        <Slider id="slope" value={9} className="mr-1 w-[107px]" />
        <input aria-label="Коэффициент" defaultValue="1" className={clsx(FIELD, "flex-1")} />
      </div>
      <div className="mt-px flex h-[19px] items-center">
        <label htmlFor="search" className="w-[75px] shrink-0 leading-[10px] whitespace-nowrap">
          Поиск критических
          <br />
          скоростей
        </label>
        <div className="relative flex-1">
          <select id="search" className="block h-4 w-full appearance-none rounded-sm border border-[#bdbdbd] bg-linear-to-b from-white to-[#f1f1f1] pl-[2px]">
            <option>Пересечение линий и попадание в круг</option>
          </select>
          <svg viewBox="0 0 6 4" className="pointer-events-none absolute top-1.5 right-[5px] h-1 w-1.5 fill-[#444]">
            <path d="M0 0h6L3 4z" />
          </svg>
        </div>
      </div>
      <div className="mt-0.5 flex items-center">
        <label htmlFor="radius" className="w-[75px] shrink-0">
          Радиус
        </label>
        <input id="radius" defaultValue="1" className={clsx(FIELD, "flex-1")} />
      </div>

      <div className="mt-[5px] flex flex-col gap-[9px]">
        <GroupHeader>Просмотр (Представление таблицы)</GroupHeader>
        <GroupHeader>Вид (Таблица)</GroupHeader>
      </div>

      <div className="mt-1 flex flex-col gap-0.5">
        {["клетки", "заголовка"].map((part) => (
          <div key={part} className="flex h-5 items-center">
            <label htmlFor={part} className="w-[61px] shrink-0 leading-[10px] whitespace-nowrap">
              Размер шрифта
              <br />
              {part}
            </label>
            <Slider id={part} value={15} className="mr-1 w-[115px]" />
            <input aria-label={`Размер шрифта ${part}, значение`} defaultValue="9" className={clsx(FIELD, "flex-1")} />
          </div>
        ))}
      </div>
    </div>
  );
}

function LeftDock() {
  return (
    <aside className="flex w-[310px] shrink-0 flex-col">
      <DockTitle>Дерево объектов</DockTitle>
      <ObjectTree />
      <div className="mt-[5px] flex h-[17px] items-end border-b border-[#c2c2c2]">
        <button type="button" className="h-[17px] w-[53px] border border-b-0 border-l-0 border-[#c2c2c2] bg-[#fafafa]">Свойства</button>
        <button type="button" className="h-4 w-16 border border-b-0 border-l-0 border-[#bdbdbd] bg-[#dfdfdf]">Информация</button>
        <button type="button" className="h-4 w-[94px] border border-b-0 border-l-0 border-[#bdbdbd] bg-[#dfdfdf]">Информация о точке</button>
      </div>
      <DockTitle>Свойства</DockTitle>
      <Properties />
    </aside>
  );
}

/* ---------- 3D view ---------- */

interface Segment {
  from: number;
  to: number;
  r: number;
  stops: string[];
  lines?: number;
  rings?: number[];
  cap: string;
}

const SHAFT: Segment[] = [
  { from: -1, to: 10, r: 5.5, stops: ["#c01828", "#801020"], lines: 5, cap: "#701020" },
  { from: 9, to: 47, r: 11, stops: ["#e8d800", "#7bdc10", "#14c838", "#10c8a0"], lines: 9, cap: "#1038a0" },
  { from: 46, to: 74, r: 8, stops: ["#1458c8", "#1c90e8"], lines: 6, cap: "#1478d0" },
  { from: 71, to: 86, r: 20, stops: ["#14a0dc", "#20d0d0"], lines: 9, rings: [79], cap: "#18b0a0" },
  { from: 88, to: 106, r: 31, stops: ["#10c890", "#14d428", "#18a020"], lines: 26, rings: [94], cap: "#0c5030" },
  { from: 106, to: 121, r: 26, stops: ["#58b010", "#a8b414"], lines: 32, cap: "#605c18" },
  { from: 121, to: 130, r: 24, stops: ["#e8e010", "#f0cc10"], lines: 12, cap: "#6a5210" },
  { from: 131, to: 155, r: 12.5, stops: ["#f0a810", "#f07010"], lines: 8, cap: "#c03010" },
  { from: 153, to: 175, r: 14.5, stops: ["#ec5010", "#e42c10"], lines: 9, cap: "#901010" },
  { from: 174, to: 253, r: 16, stops: ["#dc2410", "#f06010", "#f0c010", "#a0d810"], lines: 9, rings: [213], cap: "#102878" },
  { from: 253, to: 285, r: 12.5, stops: ["#60cc10", "#10c820"], lines: 8, rings: [270], cap: "#10a040" },
  { from: 284, to: 298, r: 38, stops: ["#14c880", "#18d8a8"], lines: 11, cap: "#0c9080" },
  { from: 302, to: 337, r: 22, stops: ["#18d0d8", "#1488e8", "#0828c8", "#0410a0"], lines: 9, cap: "#0412a8" },
];

const K = 0.45; // foreshortening of the round faces

function ShaftSegment({ seg, id }: { seg: Segment; id: string }) {
  const { from, to, r, stops, lines = 0, rings = [], cap } = seg;
  const k = r * K;
  const body = `M${from} ${-r}H${to}A${k} ${r} 0 0 1 ${to} ${r}H${from}A${k} ${r} 0 0 1 ${from} ${-r}z`;
  const mesh: string[] = [];
  for (let i = 1; i < lines; i++) {
    const a = (Math.PI * i) / lines;
    const y = -r * Math.cos(a);
    const dx = -k * Math.sin(a);
    mesh.push(`M${from + dx} ${y}L${to + dx} ${y}`);
  }
  const spokes: string[] = [];
  if (r > 22) {
    for (let i = 0; i < 24; i++) {
      const a = (Math.PI * i) / 12;
      spokes.push(`M${to} 0L${to + k * Math.cos(a)} ${r * Math.sin(a)}`);
    }
  }
  return (
    <g stroke="#14104a" strokeWidth=".6">
      <linearGradient id={id} gradientUnits="userSpaceOnUse" x1={from - k / 2} x2={to} y1="0" y2="0">
        {stops.map((c, i) => (
          <stop key={c} offset={i / (stops.length - 1)} stopColor={c} />
        ))}
      </linearGradient>
      <path d={body} fill={`url(#${id})`} />
      <path d={body} fill="url(#shade)" stroke="none" />
      <path d={mesh.join("")} fill="none" strokeWidth={lines > 20 ? 0.5 : 0.6} />
      {rings.map((t) => (
        <path key={t} d={`M${t} ${-r}A${k} ${r} 0 0 0 ${t} ${r}`} fill="none" />
      ))}
      <ellipse cx={to} cy="0" rx={k} ry={r} fill={cap} />
      {spokes.length > 0 && (
        <>
          <path d={spokes.join("")} fill="none" strokeWidth=".5" />
          <ellipse cx={to} cy="0" rx={k * 0.82} ry={r * 0.82} fill="none" />
          <ellipse cx={to} cy="0" rx={k * 0.66} ry={r * 0.66} fill="none" />
        </>
      )}
    </g>
  );
}

function RenderCanvas() {
  return (
    <svg viewBox="317 155 377 336" className="h-full w-full">
      <linearGradient id="shade" x1="0" x2="0" y1="0" y2="1">
        <stop offset="0" stopColor="#000" stopOpacity=".12" />
        <stop offset=".35" stopColor="#fff" stopOpacity=".08" />
        <stop offset="1" stopColor="#000" stopOpacity=".4" />
      </linearGradient>
      <g transform="translate(377 190) rotate(36.800)">
        {SHAFT.map((seg, i) => (
          <ShaftSegment key={seg.from} seg={seg} id={`seg${i}`} />
        ))}
        <ellipse cx="337" cy="0" rx="7" ry="15.500" fill="#030f80" />
        <ellipse cx="335" cy="0" rx="5" ry="12" fill="#0618a0" />
      </g>
      <path d="M379.500 459L389 434" stroke="#7be07b" />
      <path d="M379.500 459L358 468" stroke="#7b7be8" />
      <path d="M379.500 459L403 475" stroke="#e87b7b" />
      <path d="M390.500 425l2 8.500-7-.5z" fill="#12c812" stroke="#0a7a0a" strokeWidth=".5" />
      <path d="M352 470.500l5-5.500 4 5-3.500 1.500z" fill="#1010c8" stroke="#080870" strokeWidth=".5" />
      <path d="M410 481.500l-8.500-3 4-5z" fill="#e01212" stroke="#800808" strokeWidth=".5" />
      <g fontFamily="Liberation Sans, sans-serif" fontSize="11" fill="#111" stroke="#111" strokeWidth=".3">
        <text x="391" y="431">Y</text>
        <text x="359" y="468">Z</text>
        <text x="405" y="477">X</text>
      </g>
    </svg>
  );
}

/* ---------- spreadsheet ---------- */

const ROWS = ["1615.74", "1786.95", "4867.14", "5212.83", "6797.92", ""];

function SpreadSheet() {
  return (
    <section className="flex h-[152px] shrink-0 flex-col border-2 border-[#0d0dd8]">
      <div className="flex h-[18px] shrink-0 items-center gap-[3px] overflow-hidden">
        <b className="pr-[3px]">Показывать</b>
        <DropDown label="Показывать" value="CampbellDi" className="h-4 w-[57px] font-[Roboto,sans-serif]" />
        <b>Атрибут:</b>
        <DropDown label="Атрибут" value="Данные ря" className="h-4 w-[57px]" />
        <b>Точность:</b>
        <Spin label="Точность" value="6" className="w-[26px]" />
        <div className="ml-auto flex gap-px">
          {["dotTen", "selGreen", "gridYellow", "bracesSmall", "pasteGreen"].map((name) => (
            <button
              key={name}
              type="button"
              aria-label={name}
              className="flex h-[17px] w-[18px] items-center justify-center rounded-sm border border-[#c6c6c6] bg-[#f8f8f8]"
            >
              <Icon name={name} className="size-[14px]" />
            </button>
          ))}
        </div>
      </div>
      <div className="mt-px flex min-h-0 flex-1 overflow-hidden">
        <div className="min-w-0 flex-1 overflow-hidden bg-linear-to-b from-[#f0f0f0] from-[14px] to-white to-[14px]">
          <table className="w-[145px] table-fixed border-collapse">
            <thead>
              <tr className="h-[14px] bg-[#f4f4f4] text-left">
                <th className="w-[9px] border-r border-[#c8c8c8]" />
                <th className="w-[34px] border-r border-[#c8c8c8] pl-[2px] font-normal whitespace-nowrap">ID ряда</th>
                <th className="pl-1 font-normal whitespace-nowrap">Критические скорости</th>
              </tr>
            </thead>
            <tbody>
              {ROWS.map((value, i) => (
                <tr key={i} className={clsx("h-[22px]", i % 2 ? "bg-[#e6e5e2]" : "bg-white")}>
                  <th scope="row" className="border border-l-0 border-[#c8c8c8] bg-[#f4f4f4] font-normal">{value && i}</th>
                  <td className={clsx("border border-[#c8c8c8] pl-[2px]", i === 0 && "bg-[#e8f4fc]")}>{value && i}</td>
                  <td className="border border-[#c8c8c8] pl-[2px]">{value}</td>
                </tr>
              ))}
            </tbody>
          </table>
        </div>
        <div className="flex w-[11px] shrink-0 flex-col border border-[#d5d5d5] bg-[#e3e3e3]">
          <div className="flex flex-1 flex-col items-center border-b border-[#bbb] bg-[#fafafa] pt-1">
            <svg viewBox="0 0 6 4" className="h-1 w-1.5 fill-[#444]"><path d="M0 4h6L3 0z" /></svg>
          </div>
          <div className="h-[18px]" />
          <div className="flex h-2.5 items-center justify-center bg-[#fafafa]">
            <svg viewBox="0 0 6 4" className="h-1 w-1.5 fill-[#444]"><path d="M0 0h6L3 4z" /></svg>
          </div>
        </div>
      </div>
    </section>
  );
}

function RenderPane() {
  return (
    <div className="flex w-0 flex-[381] flex-col">
      <div className="flex min-h-0 flex-1 flex-col px-0.5">
        <div className="flex h-[34px] shrink-0 items-center pb-1">
          <Group className="w-[38px]" icons={["camUndo", "camRedo"]} iconClass="size-[15px]" />
          <Sep />
          <Group className="w-[19px]" icons={["shot"]} iconClass="size-[15px]" />
          <Sep />
          <Group className="w-[38px]" icons={["text3d", "lens"]} iconClass="size-[15px]" />
          <Sep />
          <Group className="w-[58px]" icons={["selAdd", "selSub", "selToggle"]} iconClass="size-[15px]" />
          <Sep />
          <Group className="w-[59px]" icons={["selPoly", "selPoints", "selBlock"]} iconClass="size-[15px]" />
          <button type="button" className="ml-auto">»</button>
          <span className="mr-2">RenderView1</span>
          <ViewButtons />
        </div>
        <div className="min-h-0 flex-1 bg-white">
          <RenderCanvas />
        </div>
        <div className="flex h-6 shrink-0 items-center justify-end gap-2 pt-1">
          <span className="font-bold underline">SpreadSheetView1</span>
          <ViewButtons />
        </div>
      </div>
      <SpreadSheet />
    </div>
  );
}

/* ---------- line chart ---------- */

const SPEEDS = [0, 3560, 7350, 11020];

const SERIES = [
  { name: "Мода 1", color: "#3a7fbe", values: [269, 241, 213, 189] },
  { name: "Мода 2", color: "#4daf4a", values: [269, 298, 328, 355] },
  { name: "Мода 3", color: "#9150a3", values: [803, 783, 759, 730] },
  { name: "Мода 4", color: "#f5820f", values: [803, 822, 840, 855] },
  { name: "Мода 5", color: "#a5552a", values: [1275, 1167, 1068, 994] },
  { name: "Мода 6", color: "#111111", values: [1275, 1395, 1519, 1625] },
];

const px = (v: number) => 732.5 + (v * 330) / 12000;
const py = (v: number) => 645.5 - (v * 488.5) / 1800;

function LineChart() {
  return (
    <svg viewBox="700 143 377 522" className="h-full w-full" fontFamily="Liberation Sans, sans-serif" fontSize="9" fill="#222">
      <g stroke="#f1f1f1">
        {Array.from({ length: 18 }, (_, i) => (
          <path key={i} d={`M732.500 ${py(100 * (i + 1))}H1063`} />
        ))}
        {Array.from({ length: 6 }, (_, i) => (
          <path key={i} d={`M${px(2000 * (i + 1))} 157V645`} />
        ))}
      </g>
      <path d="M732.500 157V645.500H1063" fill="none" stroke="#555" />
      {Array.from({ length: 19 }, (_, i) => (
        <g key={i}>
          <path d={`M729.500 ${py(100 * i)}h3`} stroke="#555" />
          <text x="728" y={py(100 * i) + 3} textAnchor="end">{100 * i}</text>
        </g>
      ))}
      {Array.from({ length: 7 }, (_, i) => (
        <g key={i}>
          <path d={`M${px(2000 * i)} 645.500v3`} stroke="#555" />
          <text x={px(2000 * i)} y="657" textAnchor="middle">{2000 * i}</text>
        </g>
      ))}
      <path d={`M${px(0)} ${py(0)}L${px(11020)} ${py(1750)}`} stroke="#b93236" strokeWidth="1.300" />
      {SERIES.map((s) => (
        <g key={s.name} stroke={s.color} fill={s.color}>
          <polyline points={s.values.map((v, i) => `${px(SPEEDS[i])},${py(v)}`).join(" ")} fill="none" strokeWidth="1.300" />
          {s.values.map((v, i) => (
            <circle key={i} cx={px(SPEEDS[i])} cy={py(v)} r="3.300" stroke="none" />
          ))}
        </g>
      ))}
      <rect x="956.500" y="157" width="106.500" height="86" fill="#fff" stroke="#555" />
      <path d="M960 164.500h16" stroke="#e01b1b" strokeWidth="1.300" />
      <text x="978" y="168">Критическая линия</text>
      {SERIES.map((s, i) => (
        <g key={s.name}>
          <path d={`M960 ${176.5 + 11.7 * i}h16`} stroke={s.color} strokeWidth="1.300" />
          <circle cx="968.500" cy={176.5 + 11.7 * i} r="3" fill={s.color} />
          <text x="978" y={180 + 11.7 * i}>{s.name}</text>
        </g>
      ))}
    </svg>
  );
}

function ChartPane() {
  return (
    <div className="flex w-0 flex-[379] flex-col">
      <div className="flex h-[22px] shrink-0 items-center pt-px">
        <Group className="w-[18px]" icons={["shot"]} iconClass="size-[15px]" />
        <Sep />
        <Group className="w-[58px]" icons={["selAdd", "selSub", "selToggle"]} iconClass="size-[15px]" />
        <Sep />
        <Group className="w-[40px]" icons={["selScatter", "selCursor"]} iconClass="size-[15px]" />
        <span className="mr-2 ml-auto font-[Roboto,sans-serif]">LineChartViewForCampbellDiagram1</span>
        <ViewButtons />
      </div>
      <div className="mr-[3px] mb-0.5 min-h-0 flex-1 bg-white">
        <LineChart />
      </div>
    </div>
  );
}

export default function App() {
  return (
    <div className="flex h-screen flex-col overflow-hidden bg-[#f0f0f0] font-['Noto_Sans','Open_Sans',sans-serif] text-[8px] leading-[12px] text-[#1c1c1c]">
      <div className="shrink-0 bg-white">
        <MenuBar />
      </div>
      <Toolbars />
      <div className="flex min-h-0 flex-1">
        <LeftDock />
        <main className="mb-0.5 ml-1 flex min-w-0 flex-1 flex-col border-b border-l border-[#b5b5b5]">
          <div className="flex h-[21px] shrink-0 items-end border-b border-[#bdbdbd]">
            <div className="flex h-[19px] w-20 items-center gap-0.5 border border-b-0 border-l-0 border-[#bdbdbd] bg-[#fafafa] pl-[7px]">
              <svg viewBox="0 0 12 12" className="size-3 shrink-0"><path d="M.5 1.500h11v9.500H.5z" fill="#fff" stroke="#333" /><path d="M.5 1.500h11v2.500H.5z" fill="#333" /></svg>
              Layout #1
              <button type="button" aria-label="Закрыть вкладку" className="size-2 rounded-[2px] border border-[#555]">
                <svg viewBox="0 0 6 6" className="size-full" stroke="#333"><path d="M1 1l4 4M5 1L1 5" /></svg>
              </button>
            </div>
            <button type="button" className="h-[18px] w-6 border border-b-0 border-l-0 border-[#bdbdbd] bg-[#e6e6e6] text-[10px]">+</button>
          </div>
          <div className="flex min-h-0 flex-1 gap-1">
            <RenderPane />
            <ChartPane />
          </div>
        </main>
      </div>
    </div>
  );
}
